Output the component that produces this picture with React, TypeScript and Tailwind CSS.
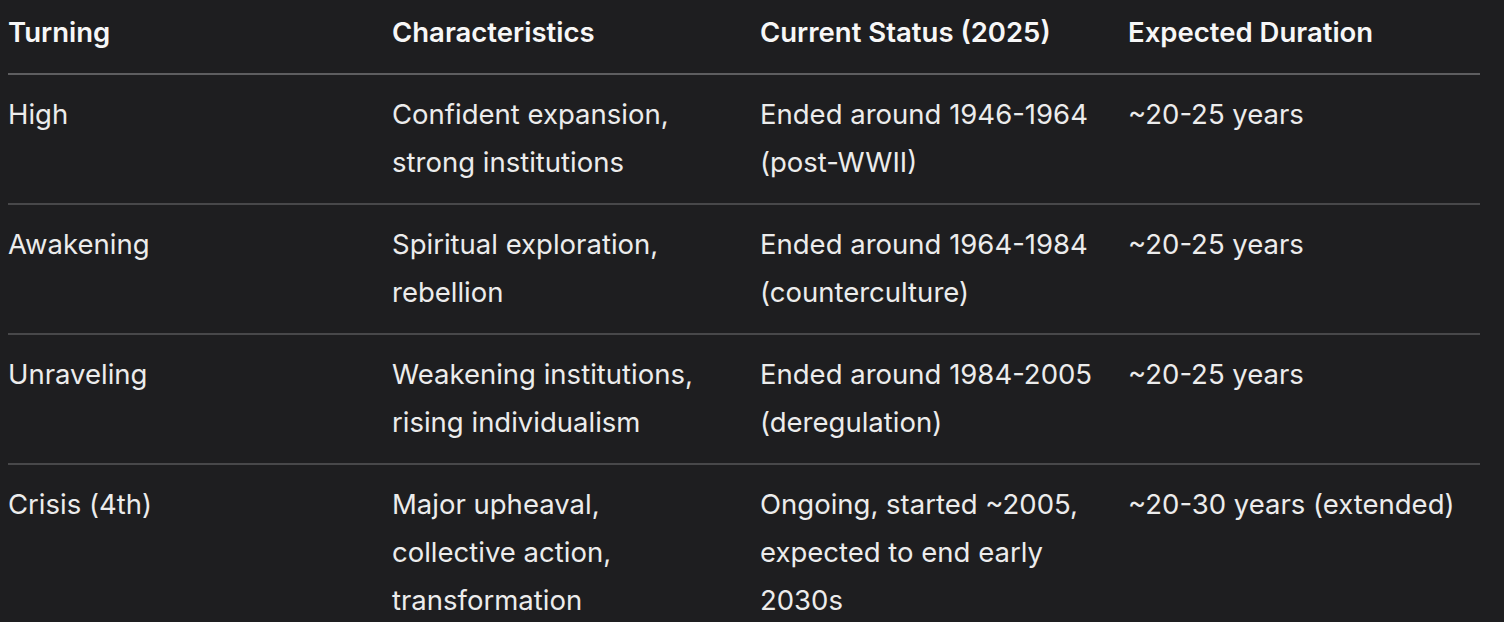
const rows = [
  ["High", "Confident expansion, strong institutions", "Ended around 1946-1964 (post-WWII)", "~20-25 years"],
  ["Awakening", "Spiritual exploration, rebellion", "Ended around 1964-1984 (counterculture)", "~20-25 years"],
  ["Unraveling", "Weakening institutions, rising individualism", "Ended around 1984-2005 (deregulation)", "~20-25 years"],
  ["Crisis (4th)", "Major upheaval, collective action, transformation", "Ongoing, started ~2005, expected to end early 2030s", "~20-30 years (extended)"],
];

const headers = ["Turning", "Characteristics", "Current Status (2025)", "Expected Duration"];

export default function App() {
  return (
    <div className="h-[622px] w-[1504px] overflow-hidden bg-[#1e1e20] pl-2 font-['Inter',sans-serif] text-[27.5px] leading-[48px] text-[#ececec]">
      <table className="w-[1472px] table-fixed border-collapse -mt-2">
        <colgroup>
          <col className="w-[384px]" />
          <col className="w-[368px]" />
          <col className="w-[368px]" />
          <col className="w-[352px]" />
        </colgroup>
        <thead>
          <tr className="border-b-2 border-[#5e5e60]">
            {headers.map((h) => (
              <th key={h} className="pt-4 pb-[17px] pr-8 text-left align-top font-semibold text-[#f7f7f7] last:pr-0">
                {h}
              </th>
            ))}
          </tr>
        </thead>
        <tbody>
          {rows.map((r) => (
            <tr key={r[0]} className="border-b-2 border-[#48484a]">
              {r.map((c, i) => (
                <td key={i} className="pt-[15px] pb-[17px] pr-8 align-top last:pr-0">
                  {c}
                </td>
              ))}
            </tr>
          ))}
        </tbody>
      </table>
    </div>
  );
}
